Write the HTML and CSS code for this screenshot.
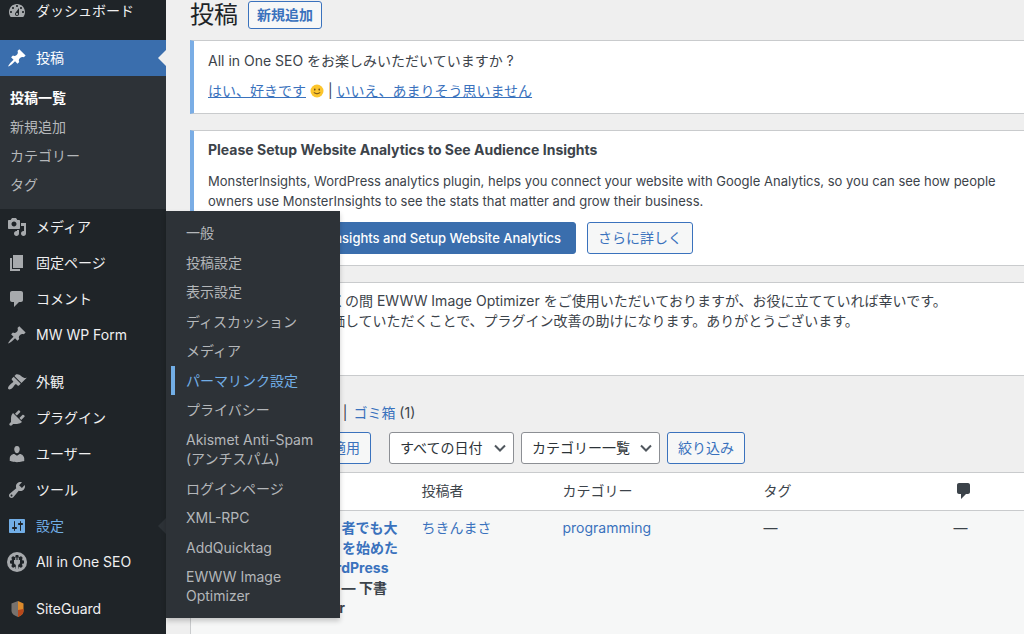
FILE: index.html
```html
<!DOCTYPE html>
<html lang="ja">
<head>
<meta charset="utf-8">
<title>投稿</title>
<link rel="stylesheet" href="styles.css">
</head>
<body>
<nav class="sidebar" aria-label="メインメニュー">
  <ul class="menu">
    <li class="menu-item menu-first"><a class="menu-link" href="#"><svg class="icon" viewBox="0 0 20 20"><path d="M3.76 16h12.48c1.1-1.37 1.76-3.11 1.76-5 0-4.42-3.58-8-8-8s-8 3.58-8 8c0 1.89.66 3.63 1.76 5zM10 4c.55 0 1 .45 1 1s-.45 1-1 1-1-.45-1-1 .45-1 1-1zM6 6c.55 0 1 .45 1 1s-.45 1-1 1-1-.45-1-1 .45-1 1-1zm8 0c.55 0 1 .45 1 1s-.45 1-1 1-1-.45-1-1 .45-1 1-1zm-5.37 5.55L12 7v6c0 1.1-.9 2-2 2s-2-.9-2-2c0-.57.24-1.08.63-1.45zM4 10c.55 0 1 .45 1 1s-.45 1-1 1-1-.45-1-1 .45-1 1-1zm12 0c.55 0 1 .45 1 1s-.45 1-1 1-1-.45-1-1 .45-1 1-1zm-5 3c0-.55-.45-1-1-1s-1 .45-1 1 .45 1 1 1 1-.45 1-1z"/></svg>ダッシュボード</a></li>
    <li class="menu-item group current"><a class="menu-link" href="#"><svg class="icon" viewBox="0 0 20 20"><path d="M10.44 3.02l1.82-1.82 6.36 6.35-1.83 1.82c-1.05-.68-2.48-.57-3.41.36l-.75.75c-.92.93-1.04 2.35-.35 3.41l-1.83 1.82-2.41-2.41-2.8 2.79c-.42.42-3.38 2.71-3.8 2.29s1.86-3.39 2.28-3.81l2.79-2.79L4.1 9.36l1.83-1.82c1.05.69 2.48.57 3.4-.36l.75-.75c.93-.92 1.05-2.35.36-3.41z"/></svg>投稿</a>
      <ul class="submenu">
        <li><a class="sub-link sub-current" href="#">投稿一覧</a></li>
        <li><a class="sub-link" href="#">新規追加</a></li>
        <li><a class="sub-link" href="#">カテゴリー</a></li>
        <li><a class="sub-link" href="#">タグ</a></li>
      </ul>
    </li>
    <li class="menu-item"><a class="menu-link" href="#"><svg class="icon" viewBox="0 0 20 20"><path d="M13 11V4c0-.55-.45-1-1-1h-1.67L9 1H5L3.67 3H2c-.55 0-1 .45-1 1v7c0 .55.45 1 1 1h10c.55 0 1-.45 1-1zM7 4.5c1.38 0 2.5 1.12 2.5 2.5S8.38 9.5 7 9.5 4.5 8.38 4.5 7 5.62 4.5 7 4.5zM14 6h5v10.5c0 1.38-1.12 2.5-2.5 2.5S14 17.88 14 16.5s1.12-2.5 2.5-2.5c.17 0 .34.02.5.05V9h-3V6zm-4 8.05V13h2v3.5c0 1.38-1.12 2.5-2.5 2.5S7 17.88 7 16.5 8.12 14 9.5 14c.17 0 .34.02.5.05z"/></svg>メディア</a></li>
    <li class="menu-item"><a class="menu-link" href="#"><svg class="icon" viewBox="0 0 20 20"><path d="M6 15V2h10v13H6zm-1 1h8v2H3V5h2v11z"/></svg>固定ページ</a></li>
    <li class="menu-item"><a class="menu-link" href="#"><svg class="icon" viewBox="0 0 20 20"><path d="M5 2h9c1.1 0 2 .9 2 2v7c0 1.1-.9 2-2 2h-2l-5 5v-5H5c-1.1 0-2-.9-2-2V4c0-1.1.9-2 2-2z"/></svg>コメント</a></li>
    <li class="menu-item"><a class="menu-link" href="#"><svg class="icon" viewBox="0 0 20 20"><path d="M10.44 3.02l1.82-1.82 6.36 6.35-1.83 1.82c-1.05-.68-2.48-.57-3.41.36l-.75.75c-.92.93-1.04 2.35-.35 3.41l-1.83 1.82-2.41-2.41-2.8 2.79c-.42.42-3.38 2.71-3.8 2.29s1.86-3.39 2.28-3.81l2.79-2.79L4.1 9.36l1.83-1.82c1.05.69 2.48.57 3.4-.36l.75-.75c.93-.92 1.05-2.35.36-3.41z"/></svg>MW WP Form</a></li>
    <li class="menu-item group"><a class="menu-link" href="#"><svg class="icon" viewBox="0 0 20 20"><path d="M14.48 11.06L7.41 3.99l1.5-1.5c.5-.56 2.3-.47 3.51.32 1.21.8 1.43 1.28 2.91 2.1 1.18.64 2.45 1.26 4.45.85zm-.71.71L6.7 4.7 4.93 6.47c-.39.39-.39 1.02 0 1.41l1.06 1.06c.39.39.39 1.03 0 1.42-.6.6-1.43 1.11-2.21 1.69-.35.26-.7.53-1.01.84C1.43 14.23.4 16.08 1.4 17.07c.99 1 2.84-.03 4.18-1.36.31-.31.58-.66.85-1.02.57-.78 1.08-1.61 1.69-2.21.39-.39 1.02-.39 1.41 0l1.06 1.06c.39.39 1.02.39 1.41 0z"/></svg>外観</a></li>
    <li class="menu-item"><a class="menu-link" href="#"><svg class="icon" viewBox="0 0 20 20"><path d="M13.11 4.36L9.87 7.6 8 5.73l3.24-3.24c.35-.34 1.05-.2 1.56.32.52.51.66 1.21.31 1.55zm-8 1.77l.91-1.12 9.01 9.01-1.19.84c-.71.71-2.63 1.16-3.82 1.16H6.14L4.9 17.26c-.59.59-1.54.59-2.12 0-.59-.58-.59-1.53 0-2.12l1.24-1.24v-3.88c0-1.13.4-3.19 1.09-3.89zm7.26 3.97l3.24-3.24c.34-.35 1.04-.21 1.55.31.52.51.66 1.21.31 1.55l-3.24 3.25z"/></svg>プラグイン</a></li>
    <li class="menu-item"><a class="menu-link" href="#"><svg class="icon" viewBox="0 0 20 20"><path d="M10 9.25c-2.27 0-2.73-3.44-2.73-3.44C7 4.02 7.82 2 9.97 2c2.16 0 2.98 2.02 2.71 3.81 0 0-.41 3.44-2.68 3.44zm0 2.57L12.72 10c2.39 0 4.52 2.33 4.52 4.53v2.49s-3.65 1.13-7.24 1.13c-3.65 0-7.24-1.13-7.24-1.13v-2.49c0-2.25 1.94-4.48 4.47-4.48z"/></svg>ユーザー</a></li>
    <li class="menu-item"><a class="menu-link" href="#"><svg class="icon" viewBox="0 0 20 20"><path d="M16.68 9.77c-1.34 1.34-3.3 1.67-4.95.99l-5.41 6.52c-.99.99-2.59.99-3.58 0s-.99-2.59 0-3.57l6.52-5.42c-.68-1.65-.35-3.61.99-4.95 1.28-1.28 3.12-1.62 4.72-1.06l-2.89 2.89 2.82 2.82 2.86-2.87c.53 1.58.18 3.39-1.08 4.65zM3.81 16.21c.4.39 1.04.39 1.43 0 .4-.4.4-1.04 0-1.43-.39-.4-1.03-.4-1.43 0-.39.39-.39 1.03 0 1.43z"/></svg>ツール</a></li>
    <li class="menu-item open"><a class="menu-link" href="#"><svg class="icon" viewBox="0 0 20 20"><path d="M18 16V4c0-.55-.45-1-1-1H3c-.55 0-1 .45-1 1v12c0 .55.45 1 1 1h14c.55 0 1-.45 1-1zM8 11h1c.55 0 1 .45 1 1s-.45 1-1 1H8v1.5c0 .28-.22.5-.5.5s-.5-.22-.5-.5V13H6c-.55 0-1-.45-1-1s.45-1 1-1h1V5.5c0-.28.22-.5.5-.5s.5.22.5.5V11zm5-2h-1c-.55 0-1-.45-1-1s.45-1 1-1h1V5.5c0-.28.22-.5.5-.5s.5.22.5.5V7h1c.55 0 1 .45 1 1s-.45 1-1 1h-1v5.5c0 .28-.22.5-.5.5s-.5-.22-.5-.5V9z"/></svg>設定</a>
      <ul class="flyout">
        <li><a class="fly-link" href="#">一般</a></li>
        <li><a class="fly-link" href="#">投稿設定</a></li>
        <li><a class="fly-link" href="#">表示設定</a></li>
        <li><a class="fly-link" href="#">ディスカッション</a></li>
        <li><a class="fly-link" href="#">メディア</a></li>
        <li><a class="fly-link fly-active" href="#">パーマリンク設定</a></li>
        <li><a class="fly-link" href="#">プライバシー</a></li>
        <li><a class="fly-link" href="#">Akismet Anti-Spam (アンチスパム)</a></li>
        <li><a class="fly-link" href="#">ログインページ</a></li>
        <li><a class="fly-link" href="#">XML-RPC</a></li>
        <li><a class="fly-link" href="#">AddQuicktag</a></li>
        <li><a class="fly-link" href="#">EWWW Image Optimizer</a></li>
      </ul>
    </li>
    <li class="menu-item"><a class="menu-link" href="#"><svg class="icon" viewBox="0 0 20 20"><circle cx="10" cy="10" r="10"/><g class="cut"><circle cx="10" cy="10" r="5.8"/><path d="M8.6 3h2.8v3H8.6zM8.6 14h2.8v3H8.6zM3 8.6h3v2.8H3zM14 8.6h3v2.8h-3zM4.1 6.1l2-2 2 2-2 2zM11.9 6.1l2-2 2 2-2 2zM4.1 13.9l2-2 2 2-2 2zM11.9 13.9l2-2 2 2-2 2z"/></g><path d="M7 8h1.2V5.600h1.200V8h1.200V5.600h1.200V8H13v2.400c0 1.300-.8 2-1.800 2.300V17H8.800v-4.300C7.800 12.400 7 11.700 7 10.400z"/></svg>All in One SEO</a></li>
    <li class="menu-item group"><a class="menu-link" href="#"><svg class="icon" viewBox="0 0 20 20"><path class="shield-l" d="M4.500 4.500L11 2v16c-4-1.500-6.500-3.500-6.500-6z"/><path class="shield-r" d="M11 2l5.500 2.500V12c0 2.500-2 4.500-5.500 6z"/><path class="shield-b" d="M11 11l5.500-1v2c0 2.500-2 4.500-5.500 6z"/></svg>SiteGuard</a></li>
  </ul>
</nav>
<main class="content">
  <header class="page-head">
    <h1 class="title">投稿</h1>
    <a class="add-new" href="#">新規追加</a>
  </header>
  <section class="notice info">
    <p class="para">All in One SEO をお楽しみいただいていますか ?</p>
    <p class="para"><a href="#">はい、好きです</a> <svg class="smile" viewBox="0 0 14 14"><circle class="face" cx="7" cy="7" r="6.500"/><ellipse class="ink" cx="4.800" cy="5.600" rx=".8" ry="1.100"/><ellipse class="ink" cx="9.200" cy="5.600" rx=".8" ry="1.100"/><path class="mouth" d="M3.800 8.600Q7 11.200 10.200 8.600"/></svg> | <a href="#">いいえ、あまりそう思いません</a></p>
  </section>
  <section class="notice info setup">
    <p class="para"><strong>Please Setup Website Analytics to See Audience Insights</strong></p>
    <p class="para latin">MonsterInsights, WordPress analytics plugin, helps you connect your website with Google Analytics, so you can see how people<br>owners use MonsterInsights to see the stats that matter and grow their business.</p>
    <div class="actions">
      <button class="btn primary" type="button">Connect MonsterInsights and Setup Website Analytics</button>
      <button class="btn" type="button">さらに詳しく</button>
    </div>
  </section>
  <section class="notice review">
    <p class="review-text">こんにちは！しばらくの間 EWWW Image Optimizer をご使用いただいておりますが、お役に立てていれば幸いです。<br>プラグインを星で評価していただくことで、プラグイン改善の助けになります。ありがとうございます。</p>
  </section>
  <ul class="views">
    <li><a href="#">すべて</a> (128) |</li>
    <li><a href="#">公開</a> (10) |</li>
    <li><a href="#">ゴミ箱</a> (1)</li>
  </ul>
  <form class="filters">
    <span class="pick bulk"><select class="select" aria-label="一括操作"><option>一括操作</option></select><svg class="chevron" viewBox="0 0 12 12"><path d="M1 3.500l5 5 5-5"/></svg></span>
    <button class="btn apply" type="button">適用</button>
    <span class="pick"><select class="select" aria-label="日付で絞り込む"><option>すべての日付</option></select><svg class="chevron" viewBox="0 0 12 12"><path d="M1 3.500l5 5 5-5"/></svg></span>
    <span class="pick"><select class="select" aria-label="カテゴリーで絞り込む"><option>カテゴリー一覧</option></select><svg class="chevron" viewBox="0 0 12 12"><path d="M1 3.500l5 5 5-5"/></svg></span>
    <button class="btn" type="button">絞り込み</button>
  </form>
  <table class="posts">
    <thead>
      <tr><th class="c-title" scope="col"></th><th class="c-author" scope="col">投稿者</th><th class="c-cat" scope="col">カテゴリー</th><th class="c-tag" scope="col">タグ</th><th class="c-com" scope="col"><svg class="bubble" role="img" aria-label="コメント" viewBox="0 0 20 20"><path d="M5 2h9c1.100 0 2 .9 2 2v7c0 1.100-.9 2-2 2h-2l-5 5v-5H5c-1.100 0-2-.9-2-2V4c0-1.100.9-2 2-2z"/></svg></th></tr>
    </thead>
    <tbody>
      <tr>
        <td class="c-title"><strong><a href="#">プログラム（初心）者でも大<br>丈夫「私のブログ」を始めた<br>理由ときっかけWordPress</a><br>を解説していこう　— 下書<br>き固定— Elementor</strong></td>
        <td><a href="#">ちきんまさ</a></td>
        <td><a href="#">programming</a></td>
        <td>—</td>
        <td>—</td>
      </tr>
    </tbody>
  </table>
</main>
</body>
</html>
```
FILE: styles.css
```css
* { box-sizing: border-box; }
html, body { height: 100%; }
body {
  margin: 0;
  display: flex;
  overflow: hidden;
  background: #efefef;
  color: #3c434a;
  font: 14px/20px Inter, "Noto Sans CJK JP", sans-serif;
}
ul { list-style: none; margin: 0; padding: 0; }
a { color: #3a72bd; }

.sidebar { flex: 0 0 166px; background: #1f2428; position: relative; z-index: 2; }
.menu-item { position: relative; }
.group { margin-top: 11px; }
.menu-link {
  display: flex;
  align-items: center;
  gap: 9px;
  height: 36px;
  padding-left: 7px;
  color: #f0f0f1;
  text-decoration: none;
}
.menu-first .menu-link { height: 29px; padding-bottom: 8px; }
.icon { width: 20px; height: 20px; flex: none; fill: #a7aaad; }
.cut { fill: #1f2428; }
.shield-l { fill: #77726e; }
.shield-r { fill: #dc8a2c; }
.shield-b { fill: #b8481c; }
.current > .menu-link { background: #3a6ead; color: #fff; }
.current .icon { fill: #fff; }
.current > .menu-link::after,
.open > .menu-link::after {
  content: "";
  position: absolute;
  right: 0;
  top: 10px;
  border: 8px solid transparent;
  border-left: 0;
  border-right-color: #efefef;
}
.open > .menu-link::after { border-right-color: #2d3237; }
.open > .menu-link { color: #72aee6; }
.open .icon { fill: #72aee6; }

.submenu { background: #2d3237; padding: 7px 0 10px; }
.sub-link {
  display: block;
  padding: 5px 10px;
  line-height: 19px;
  color: #b4b7ba;
  text-decoration: none;
}
.sub-current { color: #fff; font-weight: 700; }

.flyout {
  position: absolute;
  left: 100%;
  bottom: -74px;
  width: 174px;
  height: 407px;
  padding: 7px 0 7px;
  display: flex;
  flex-direction: column;
  background: #2d3237;
  box-shadow: 0 3px 5px rgba(0, 0, 0, .2);
}
.flyout li { flex: 1 0 auto; display: flex; }
.fly-link {
  flex: 1;
  padding: 5px 20px;
  line-height: 19px;
  color: #b4b7ba;
  text-decoration: none;
}
.fly-active { color: #72aee6; box-shadow: inset 4px 0 #72aee6; margin-left: 5px; padding-left: 15px; }

.content { flex: 1; min-width: 0; padding-left: 24px; }
.page-head { display: flex; align-items: center; gap: 10px; padding-top: 1px; }
.title { margin: 0; font-size: 24px; line-height: 28px; font-weight: 400; color: #1d2327; }
.add-new {
  padding: 0 8px;
  border: 1px solid #3a72bd;
  border-radius: 3px;
  background: #f6f7f7;
  line-height: 26px;
  font-weight: 600;
  text-decoration: none;
}
.notice {
  margin-top: 16px;
  padding: 5px 0 7px 14px;
  border: 1px solid #c9cbcd;
  border-right: 0;
  background: #fff;
}
.page-head + .notice { margin-top: 11px; }
.info { border-left: 4px solid #7aade5; }
.para { margin: 0; padding: 5px 0; }
.smile { width: 14px; height: 14px; vertical-align: -2px; }
.face { fill: #fcc52c; }
.ink { fill: #6b4a16; }
.mouth { fill: none; stroke: #6b4a16; }
.setup { padding-top: 4px; }
.latin { font-size: 13px; padding-top: 6px; }
.actions { display: flex; gap: 11px; padding: 6px 0 4px; }
.btn {
  height: 32px;
  padding: 0 10px;
  border: 1px solid #3a72bd;
  border-radius: 3px;
  background: #f6f7f7;
  color: #3a72bd;
  font: inherit;
}
.primary { padding: 0 14px; background: #3a6ead; border-color: #3a6ead; color: #fff; font-size: 13px; font-weight: 500; }
.review { padding-top: 8px; padding-bottom: 44px; }
.review-text { margin: 0; }
.views { display: flex; gap: 6px; margin-top: 27px; }
.views a, .posts a { text-decoration: none; }
.filters { display: flex; gap: 7px; margin-top: 9px; }
.pick { position: relative; display: inline-flex; }
.bulk { width: 124px; }
.apply { margin-right: 11px; }
.select {
  appearance: none;
  width: 100%;
  height: 32px;
  padding: 0 29px 0 10px;
  border: 1px solid #8c8f94;
  border-radius: 3px;
  background: #fff;
  color: #2c3338;
  font: inherit;
}
.chevron {
  position: absolute;
  right: 8px;
  top: 10px;
  width: 12px;
  height: 12px;
  fill: none;
  stroke: #50575e;
  stroke-width: 2;
  pointer-events: none;
}
.posts {
  width: 100%;
  margin-top: 8px;
  border-collapse: collapse;
  table-layout: fixed;
  border-top: 1px solid #c9cbcd;
  border-left: 1px solid #c9cbcd;
  background: #f6f7f7;
}
.posts th {
  height: 38px;
  padding: 0 0 2px;
  background: #fff;
  border-bottom: 1px solid #c9cbcd;
  text-align: left;
  font-weight: 400;
}
.posts td { padding: 7px 0 16px; vertical-align: top; }
.posts .c-title { width: 231px; padding-left: 25px; white-space: nowrap; }
.c-author { width: 141px; }
.c-cat { width: 201px; }
.c-tag { width: 190px; }
.bubble { display: block; width: 20px; height: 20px; fill: #3c434a; }
```
